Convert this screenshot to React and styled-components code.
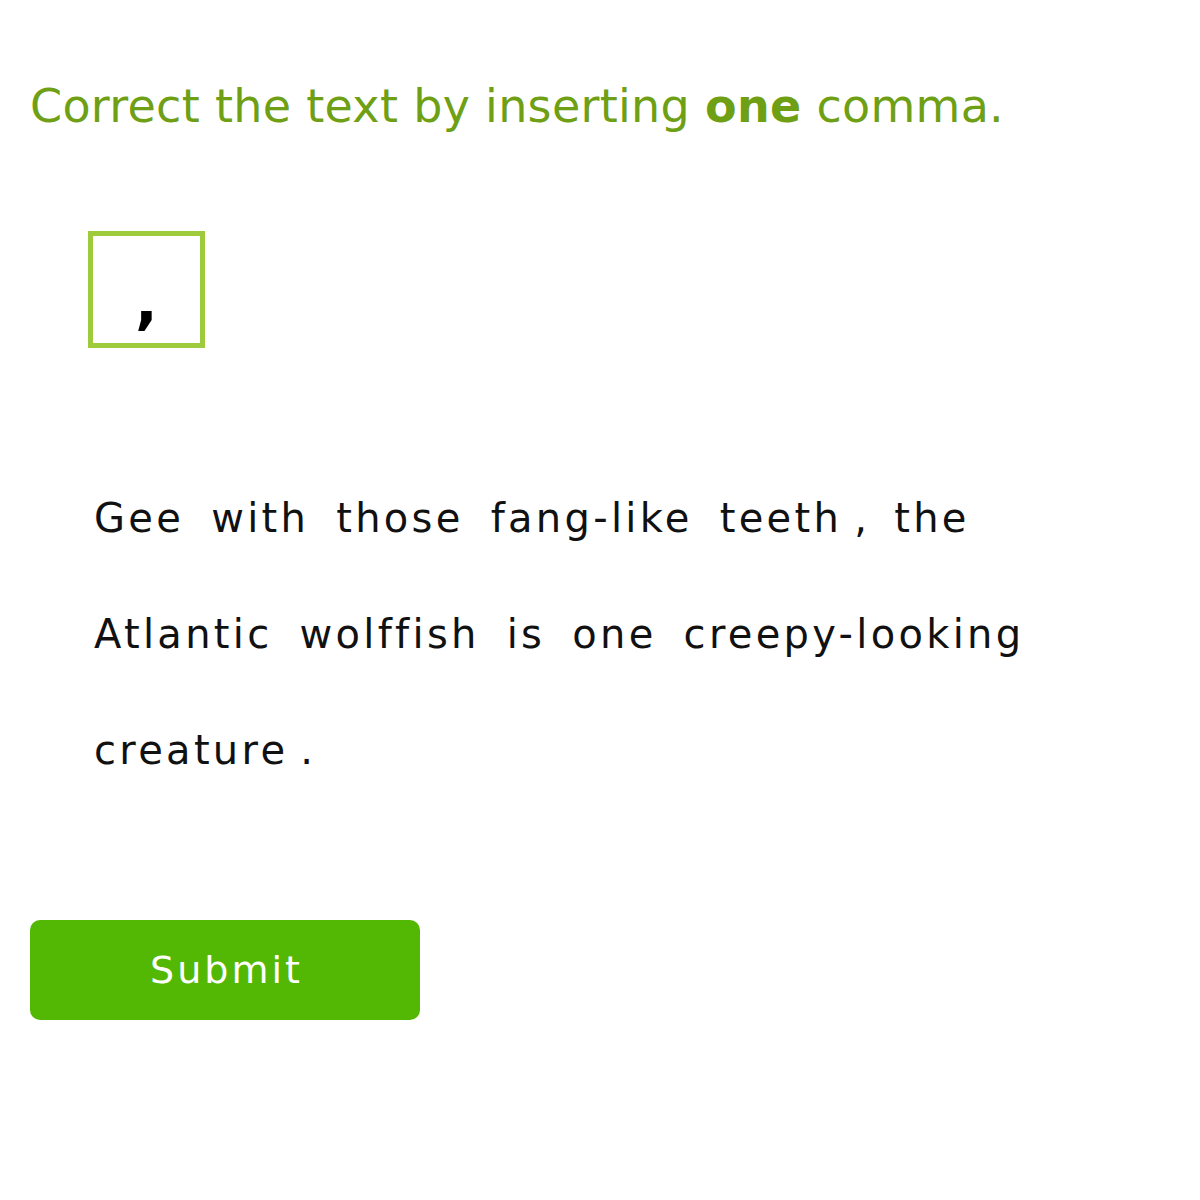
import React from 'react';
import styled, { createGlobalStyle } from 'styled-components';

const GlobalStyle = createGlobalStyle`
    body {
        margin: 0;
        background: #ffffff;
        font-family: "DejaVu Sans", Verdana, sans-serif;
    }
`;

const sentence = [
    ['Gee', 'with', 'those', 'fang-like', 'teeth', ',', 'the'],
    ['Atlantic', 'wolffish', 'is', 'one', 'creepy-looking'],
    ['creature', '.'],
];

const App = () => {
    return (
        <>
            <GlobalStyle />
            <Page>
                <Prompt>
                    Correct the text by inserting <b>one</b> comma.
                </Prompt>
                <TileRow>
                    <CommaTile>,</CommaTile>
                </TileRow>
                <Passage>
                    {sentence.map((line, idx) => (
                        <Line key={idx}>
                            {line.map((word, i) => (
                                <Word key={i} $punct={word.length === 1}>{word}</Word>
                            ))}
                        </Line>
                    ))}
                </Passage>
                <SubmitButton>Submit</SubmitButton>
            </Page>
        </>
    );
};

const Page = styled.div`
    padding: 76px 30px 0 30px;
    display: flex;
    flex-direction: column;
    align-items: flex-start;
`;

const Prompt = styled.div`
    color: #6f9f14;
    font-size: 46px;
    line-height: 60px;
    letter-spacing: 0.3px;

    b {
        font-weight: bold;
    }
`;

const TileRow = styled.div`
    display: flex;
    padding: 95px 0 0 58px;
`;

const CommaTile = styled.div`
    width: 107px;
    height: 85px;
    padding-top: 22px;
    border: 5px solid #9dcb3c;
    display: flex;
    align-items: center;
    justify-content: center;
    font-size: 60px;
    font-weight: bold;
    color: #000;
`;

const Passage = styled.div`
    padding: 112px 0 0 64px;
    display: flex;
    flex-direction: column;
`;

const Line = styled.div`
    display: flex;
    height: 116px;
    align-items: center;
    font-size: 40px;
    letter-spacing: 3.3px;
    color: #111;
`;

const Word = styled.span`
    margin-right: ${p => (p.$punct ? '24px' : '27px')};
    margin-left: ${p => (p.$punct ? '-15px' : '0')};
`;

const SubmitButton = styled.button`
    margin-top: 112px;
    width: 390px;
    height: 100px;
    border: none;
    border-radius: 10px;
    background: #53b804;
    color: #ffffff;
    font-family: "DejaVu Sans", Verdana, sans-serif;
    font-size: 38px;
    letter-spacing: 3px;
    text-indent: 3px;
`;

export default App;
